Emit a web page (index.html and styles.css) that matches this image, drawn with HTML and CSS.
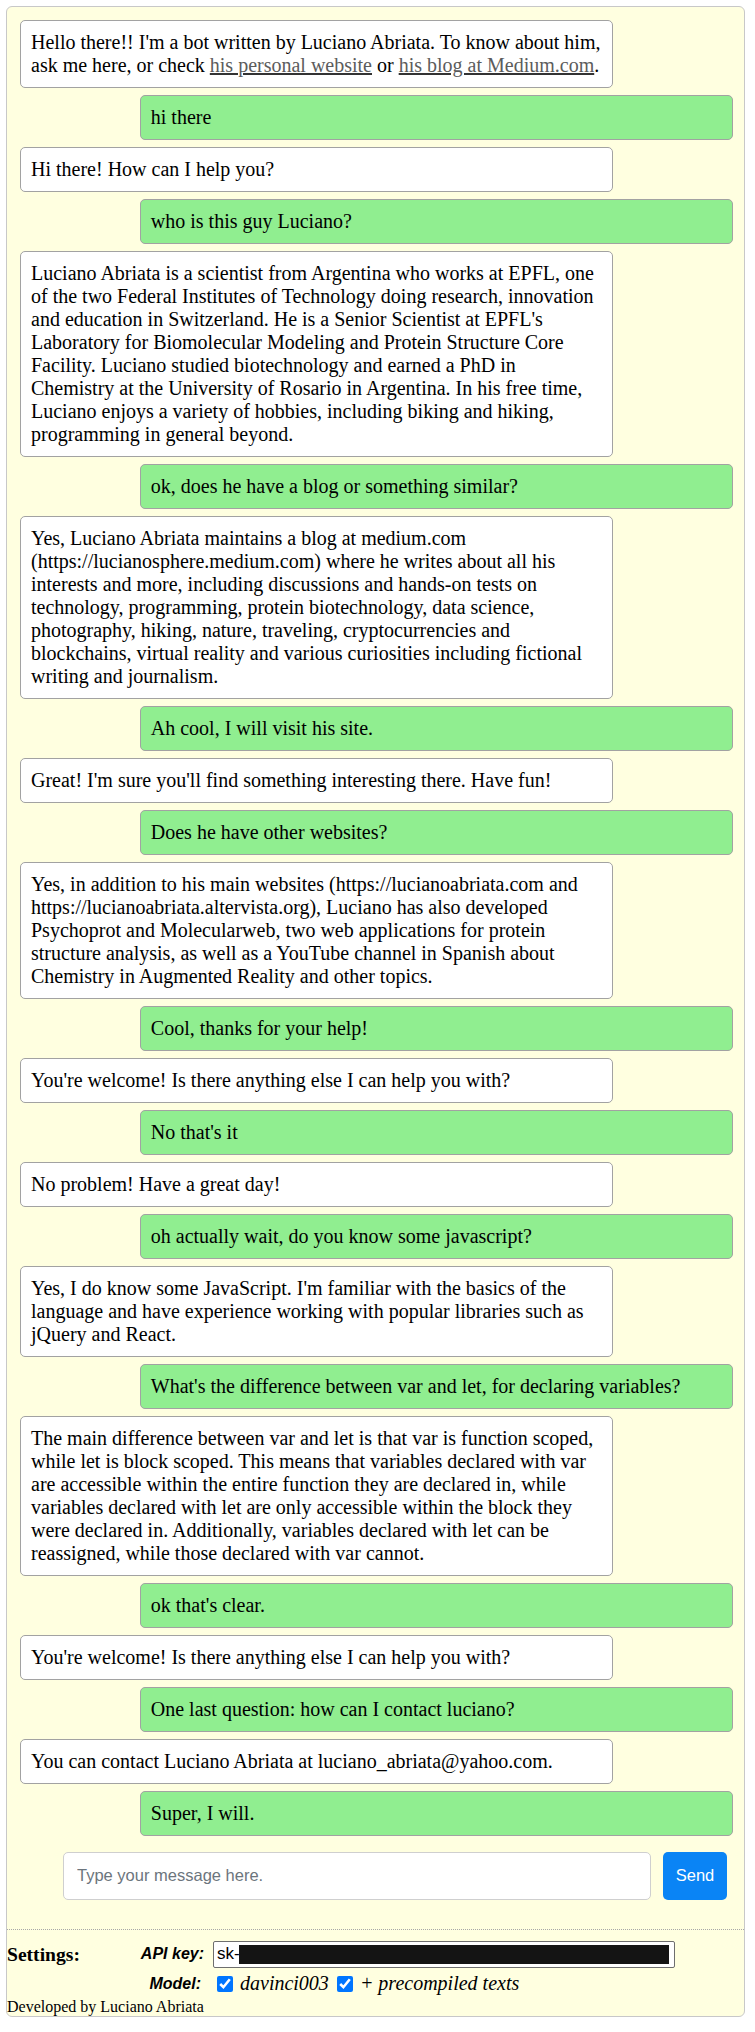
FILE: index.html
```html
<!DOCTYPE html>
<html lang="en">
<head>
<meta charset="utf-8">
<title>Chatbot by Luciano Abriata</title>
<link rel="stylesheet" href="styles.css">
</head>
<body>
<div class="app">
  <div class="chat">
    <div class="msg bot">Hello there!! I'm a bot written by Luciano Abriata. To know about him, ask me here, or check <a href="#">his personal website</a> or <a href="#">his blog at Medium.com</a>.</div>
    <div class="msg user">hi there</div>
    <div class="msg bot">Hi there! How can I help you?</div>
    <div class="msg user">who is this guy Luciano?</div>
    <div class="msg bot">Luciano Abriata is a scientist from Argentina who works at EPFL, one of the two Federal Institutes of Technology doing research, innovation and education in Switzerland. He is a Senior Scientist at EPFL's Laboratory for Biomolecular Modeling and Protein Structure Core Facility. Luciano studied biotechnology and earned a PhD in Chemistry at the University of Rosario in Argentina. In his free time, Luciano enjoys a variety of hobbies, including biking and hiking, programming in general beyond.</div>
    <div class="msg user">ok, does he have a blog or something similar?</div>
    <div class="msg bot">Yes, Luciano Abriata maintains a blog at medium.com (https://lucianosphere.medium.com) where he writes about all his interests and more, including discussions and hands-on tests on technology, programming, protein biotechnology, data science, photography, hiking, nature, traveling, cryptocurrencies and blockchains, virtual reality and various curiosities including fictional writing and journalism.</div>
    <div class="msg user">Ah cool, I will visit his site.</div>
    <div class="msg bot">Great! I'm sure you'll find something interesting there. Have fun!</div>
    <div class="msg user">Does he have other websites?</div>
    <div class="msg bot">Yes, in addition to his main websites (https://lucianoabriata.com and https://lucianoabriata.altervista.org), Luciano has also developed Psychoprot and Molecularweb, two web applications for protein structure analysis, as well as a YouTube channel in Spanish about Chemistry in Augmented Reality and other topics.</div>
    <div class="msg user">Cool, thanks for your help!</div>
    <div class="msg bot">You're welcome! Is there anything else I can help you with?</div>
    <div class="msg user">No that's it</div>
    <div class="msg bot">No problem! Have a great day!</div>
    <div class="msg user">oh actually wait, do you know some javascript?</div>
    <div class="msg bot">Yes, I do know some JavaScript. I'm familiar with the basics of the language and have experience working with popular libraries such as jQuery and React.</div>
    <div class="msg user">What's the difference between var and let, for declaring variables?</div>
    <div class="msg bot">The main difference between var and let is that var is function scoped, while let is block scoped. This means that variables declared with var are accessible within the entire function they are declared in, while variables declared with let are only accessible within the block they were declared in. Additionally, variables declared with let can be reassigned, while those declared with var cannot.</div>
    <div class="msg user">ok that's clear.</div>
    <div class="msg bot">You're welcome! Is there anything else I can help you with?</div>
    <div class="msg user">One last question: how can I contact luciano?</div>
    <div class="msg bot">You can contact Luciano Abriata at luciano_abriata@yahoo.com.</div>
    <div class="msg user">Super, I will.</div>
  </div>

  <div class="composer">
    <input class="composer-input" type="text" placeholder="Type your message here.">
    <button class="send-btn" type="button">Send</button>
  </div>

  <div class="divider"></div>

  <div class="settings">
    <div class="settings-title">Settings:</div>
    <div class="settings-label">API key:</div>
    <div class="settings-value">
      <span class="key-wrap">
        <input class="key-input" type="text" value="sk-">
        <span class="key-mask"></span>
      </span>
    </div>

    <div class="settings-empty"></div>
    <div class="settings-label model-label">Model:</div>
    <div class="settings-value model-value">
      <label class="opt"><input class="check" type="checkbox" checked> davinci003</label>
      <label class="opt"><input class="check" type="checkbox" checked> + precompiled texts</label>
    </div>
  </div>

  <div class="footer">Developed by Luciano Abriata</div>
</div>
</body>
</html>
```
FILE: styles.css
```css
html, body {
  margin: 0;
  padding: 0;
  background: #ffffff;
}

body {
  font-family: "Liberation Serif", "Times New Roman", serif;
  color: #000;
}

.app {
  box-sizing: border-box;
  width: 739px;
  margin: 6px 0 0 6px;
  background: #ffffe0;
  border: 1px solid #c8c8c8;
  border-radius: 6px;
}

.chat {
  display: flex;
  flex-direction: column;
  gap: 7.5px;
  padding: 13px 11px 0 13px;
}

.msg {
  box-sizing: border-box;
  width: 83.2%;
  padding: 9.75px 10px;
  border: 1px solid #a2a2a2;
  border-radius: 5px;
  font-size: 20px;
  line-height: 23px;
}

.msg.bot {
  align-self: flex-start;
  background: #ffffff;
}

.msg.user {
  align-self: flex-end;
  background: #90ee90;
}

.msg a {
  color: #5c5c5c;
  text-decoration: underline;
  text-decoration-color: #333;
}

.composer {
  display: flex;
  gap: 12px;
  margin-top: 16px;
  padding: 0 17px 0 56px;
}

.composer-input {
  flex: 1;
  box-sizing: border-box;
  height: 48px;
  margin: 0;
  padding: 0 13px;
  border: 1px solid #cfcfcf;
  border-radius: 5px;
  background: #fff;
  font-family: "Liberation Sans", Arial, sans-serif;
  font-size: 16.5px;
  color: #333;
}

.composer-input::placeholder {
  color: #6c757d;
}

.send-btn {
  box-sizing: border-box;
  width: 64px;
  height: 48px;
  margin: 0;
  border: none;
  border-radius: 5px;
  background: #0a84f5;
  color: #fff;
  font-family: "Liberation Sans", Arial, sans-serif;
  font-size: 16.5px;
  padding: 0;
}

.divider {
  margin-top: 29px;
  border-top: 1px dotted #a8a8a8;
}

.settings {
  display: grid;
  grid-template-columns: 129px 68px 1fr;
  row-gap: 4px;
  align-items: center;
  padding-top: 11px;
}

.settings-title {
  font-weight: bold;
  font-size: 19.6px;
  line-height: 23px;
}

.settings-label {
  text-align: right;
  font-family: "Liberation Sans", Arial, sans-serif;
  font-weight: bold;
  font-style: italic;
  font-size: 16px;
}

.model-label {
  padding-right: 3px;
}

.settings-value {
  padding-left: 9px;
}

.key-wrap {
  position: relative;
  display: inline-block;
}

.key-input {
  box-sizing: border-box;
  display: block;
  width: 462px;
  height: 27.5px;
  margin: 0;
  padding: 0 3px;
  border: 1px solid #6e6e6e;
  border-radius: 2px;
  background: #fff;
  font-family: "Liberation Sans", Arial, sans-serif;
  font-size: 17px;
  color: #000;
}

.key-mask {
  position: absolute;
  left: 26px;
  right: 6px;
  top: 4px;
  bottom: 4px;
  background: #141414;
}

.model-value {
  display: flex;
  align-items: center;
  gap: 4px;
  font-style: italic;
  font-size: 20px;
  line-height: 23px;
}

.opt {
  display: inline-flex;
  align-items: center;
  white-space: pre;
}

.check {
  width: 16px;
  height: 16px;
  margin: 0 2px 0 4px;
}

.footer {
  margin-top: 2.5px;
  font-size: 16px;
  line-height: 18px;
}
```
